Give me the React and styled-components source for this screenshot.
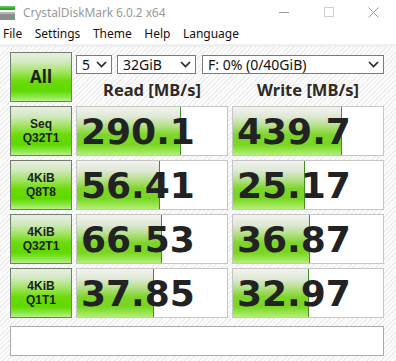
import React from "react";
import styled, { createGlobalStyle } from "styled-components";

const Global = createGlobalStyle`
  html, body { margin: 0; padding: 0; background: #fff; }
  body { font-family: "Noto Sans", "DejaVu Sans", sans-serif; }
  * { box-sizing: border-box; }
`;

const Window = styled.div`
  width: 396px;
  height: 361px;
  display: flex;
  flex-direction: column;
  background: #fff;
  overflow: hidden;
`;

const TitleBar = styled.div`
  height: 24px;
  display: flex;
  align-items: center;
`;

const Title = styled.span`
  margin-left: 7px;
  font-size: 12px;
  color: #9a9a9a;
  font-family: "Noto Sans", sans-serif;
  letter-spacing: -0.1px;
`;

const Controls = styled.div`
  margin-left: auto;
  display: flex;
  align-items: center;
  height: 24px;
`;

const Ctrl = styled.div`
  width: 45px;
  height: 24px;
  display: flex;
  align-items: center;
  justify-content: center;
`;

const MenuBar = styled.div`
  height: 20px;
  display: flex;
  align-items: center;
  padding-left: 3px;
  gap: 12.5px;
  font-size: 12px;
  color: #111;
`;

const MenuItem = styled.span`
  line-height: 20px;
`;

const Sep = styled.div`
  height: 3px;
  background: #f0f0f0;
`;

const Content = styled.div`
  flex: 1;
  padding: 5px 12px 0 10px;
  background-color: #fcfcfc;
  background-image: repeating-linear-gradient(
    135deg,
    #fcfcfc 0px,
    #fcfcfc 2.2px,
    #ededed 2.2px,
    #ededed 3.3px
  );
  display: flex;
  flex-direction: column;
`;

const Grid = styled.div`
  display: grid;
  grid-template-columns: 62px 152px 152px;
  column-gap: 4px;
  row-gap: 4px;
  grid-auto-rows: 50px;
`;

const greenGrad = `linear-gradient(
  to bottom,
  #e9eee4 0%,
  #d3e9c2 18%,
  #a6e46a 38%,
  #6cdb0a 58%,
  #5fd900 78%,
  #8ee84a 92%,
  #b8f08c 100%
)`;

const GreenButton = styled.div`
  border: 1px solid #6f806c;
  background: ${greenGrad};
  display: flex;
  flex-direction: column;
  align-items: center;
  justify-content: center;
  color: #1d1d1d;
  font-weight: 700;
  font-family: ${(p) => (p.$big ? '"Noto Sans", sans-serif' : '"Liberation Sans", Arial, sans-serif')};
  font-size: ${(p) => (p.$big ? "17px" : "12px")};
  line-height: ${(p) => (p.$big ? "20px" : "14px")};
  text-align: center;
`;

const HeaderArea = styled.div`
  grid-column: 2 / 4;
  display: grid;
  grid-template-columns: 152px 152px;
  column-gap: 4px;
  grid-template-rows: 19px 1fr;
  padding-top: 3px;
`;

const Selects = styled.div`
  grid-column: 1 / 3;
  display: flex;
  gap: 5px;
`;

const Select = styled.div`
  width: ${(p) => p.$w}px;
  height: 19px;
  border: 1px solid #7a7a7a;
  background: #fff;
  display: flex;
  align-items: center;
  padding: 0 4px 0 5px;
  font-size: 14px;
  color: #111;
  margin-left: ${(p) => p.$ml || 0}px;
`;

const SelectText = styled.span`
  flex: 1;
  white-space: nowrap;
  line-height: 17px;
`;

const ColHead = styled.div`
  display: flex;
  align-items: center;
  justify-content: center;
  font-weight: 700;
  font-size: 16.5px;
  color: #2f2a26;
  padding-top: 3px;
`;

const ValueBox = styled.div`
  border: 1px solid #c6c6c6;
  background: #fff;
  display: grid;
  grid-template: 1fr / 1fr;
`;

const Fill = styled.div`
  grid-area: 1 / 1;
  justify-self: start;
  height: 100%;
  background: linear-gradient(
    to bottom,
    #f2f3ef 0%,
    #dfe8d6 20%,
    #b3df85 40%,
    #7ed52a 58%,
    #78d620 78%,
    #9be654 92%,
    #b4ef7c 100%
  );
  border-right: 1px solid #3f8f22;
`;

const Num = styled.div`
  grid-area: 1 / 1;
  align-self: center;
  padding-left: 4px;
  font-family: "DejaVu Sans", Verdana, sans-serif;
  font-weight: 700;
  font-size: 36px;
  line-height: 42px;
  color: #222;
  padding-top: 1px;
  white-space: nowrap;
`;

const Comment = styled.div`
  margin-top: 8px;
  height: 30px;
  border: 1px solid #a9a9a9;
  background: #fff;
`;

const Chevron = () => (
  <svg width="11" height="7" viewBox="0 0 11 7">
    <path d="M1 1 L5.5 5.5 L10 1" fill="none" stroke="#222" strokeWidth="1.6" />
  </svg>
);

const AppIcon = () => (
  <svg width="16" height="18" viewBox="0 0 16 18">
    <rect x="0" y="3" width="15" height="4" fill="#2fa62f" />
    <rect x="0" y="3" width="15" height="1.5" fill="#5fcf4f" />
    <rect x="0" y="9" width="15" height="8" fill="#8c8c8c" />
    <rect x="0" y="9" width="15" height="2" fill="#b5b5b5" />
    <rect x="11" y="13" width="2" height="2" fill="#3fbf3f" />
  </svg>
);

const rows = [
  { l1: "Seq", l2: "Q32T1", r: "290.1", w: "439.7" },
  { l1: "4KiB", l2: "Q8T8", r: "56.41", w: "25.17" },
  { l1: "4KiB", l2: "Q32T1", r: "66.53", w: "36.87" },
  { l1: "4KiB", l2: "Q1T1", r: "37.85", w: "32.97" },
];

const pct = (v) => Math.min(100, (Math.log10(parseFloat(v) * 10) / 5) * 100);

function Value({ v }) {
  return (
    <ValueBox>
      <Fill style={{ width: `${pct(v)}%` }} />
      <Num>{v}</Num>
    </ValueBox>
  );
}

export default function App() {
  return (
    <>
      <Global />
      <Window>
        <TitleBar>
          <AppIcon />
          <Title>CrystalDiskMark 6.0.2 x64</Title>
          <Controls>
            <Ctrl>
              <svg width="10" height="10" viewBox="0 0 10 10">
                <path d="M0 5.5 H10" stroke="#9a9a9a" strokeWidth="1" />
              </svg>
            </Ctrl>
            <Ctrl>
              <svg width="10" height="10" viewBox="0 0 10 10">
                <rect x="0.5" y="0.5" width="9" height="9" fill="none" stroke="#d0d0d0" strokeWidth="1" />
              </svg>
            </Ctrl>
            <Ctrl>
              <svg width="11" height="11" viewBox="0 0 11 11">
                <path d="M0.5 0.5 L10.5 10.5 M10.5 0.5 L0.5 10.5" stroke="#9a9a9a" strokeWidth="1" />
              </svg>
            </Ctrl>
          </Controls>
        </TitleBar>
        <MenuBar>
          <MenuItem>File</MenuItem>
          <MenuItem>Settings</MenuItem>
          <MenuItem>Theme</MenuItem>
          <MenuItem>Help</MenuItem>
          <MenuItem>Language</MenuItem>
        </MenuBar>
        <Sep />
        <Content>
          <Grid>
            <GreenButton $big>All</GreenButton>
            <HeaderArea>
              <Selects>
                <Select $w={36}>
                  <SelectText>5</SelectText>
                  <Chevron />
                </Select>
                <Select $w={79}>
                  <SelectText>32GiB</SelectText>
                  <Chevron />
                </Select>
                <Select $w={182} $ml={1}>
                  <SelectText>F: 0% (0/40GiB)</SelectText>
                  <Chevron />
                </Select>
              </Selects>
              <ColHead>Read [MB/s]</ColHead>
              <ColHead>Write [MB/s]</ColHead>
            </HeaderArea>
            {rows.map((r, i) => (
              <React.Fragment key={i}>
                <GreenButton>
                  <span>{r.l1}</span>
                  <span>{r.l2}</span>
                </GreenButton>
                <Value v={r.r} />
                <Value v={r.w} />
              </React.Fragment>
            ))}
          </Grid>
          <Comment />
        </Content>
      </Window>
    </>
  );
}
